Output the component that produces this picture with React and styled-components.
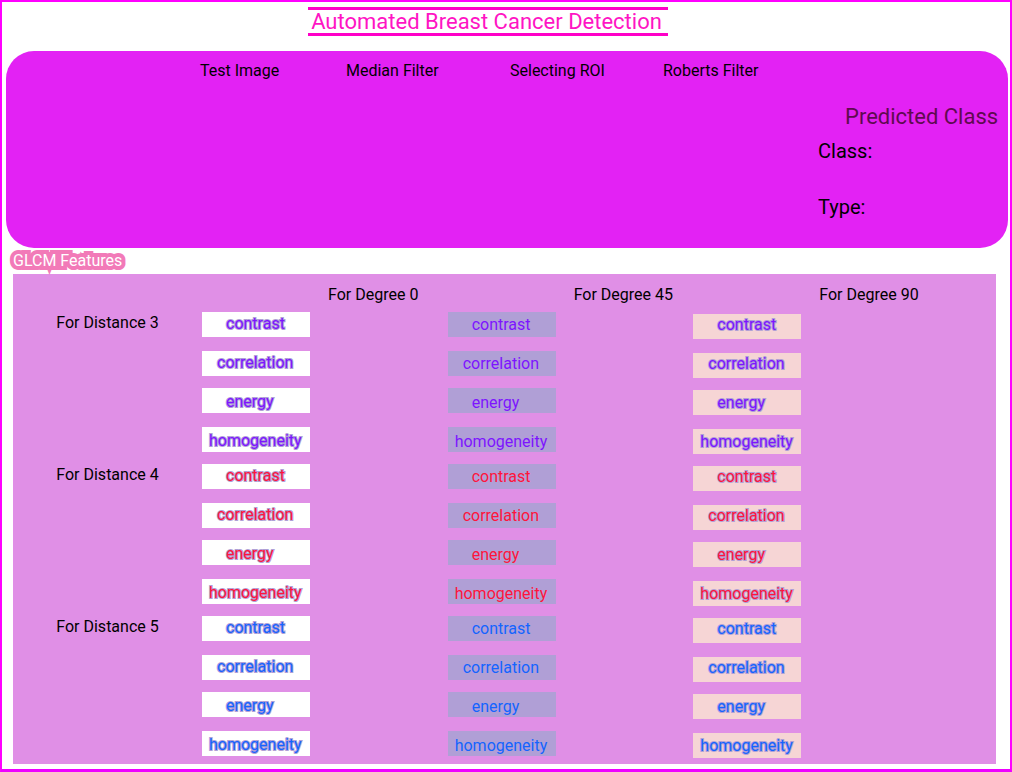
import React from "react";
import styled, { createGlobalStyle } from "styled-components";

const GlobalStyle = createGlobalStyle`
  *, *::before, *::after { box-sizing: border-box; }
  body {
    margin: 0;
    background: #ffffff;
    color: #000000;
    font-family: Roboto, "Liberation Sans", sans-serif;
    font-size: 16px;
    line-height: 20px;
  }
  h1, h2, p, figure, dl, dt, dd { margin: 0; font-weight: 400; }
`;

const Page = styled.main`
  min-height: 100vh;
  border: 2px solid #ff00ff;
  border-bottom: 3px solid #ee00ff;
  padding: 5px 2px 5px 4px;
`;

const Header = styled.header`
  display: flex;
  justify-content: center;
  padding-right: 38px;
`;

const Title = styled.h1`
  border: solid #ff00c8;
  border-width: 3px 0;
  padding: 1px 6px 0 3px;
  font-size: 22px;
  line-height: 22px;
  color: #ff14c4;
`;

const Summary = styled.section`
  display: grid;
  grid-template-columns: 146fr 164fr 153fr 155fr 190fr;
  min-height: 197px;
  margin-top: 15px;
  padding: 10px 0 0 194px;
  border-radius: 28px;
  background: #e322f4;
`;

const Stage = styled.figcaption`
  white-space: nowrap;
`;

const Prediction = styled.div`
  padding-top: 44px;
`;

const PredictionTitle = styled.h2`
  padding-left: 27px;
  font-size: 22px;
  line-height: 24px;
  color: #5f0a50;
  white-space: nowrap;
`;

const ResultList = styled.dl`
  display: grid;
  gap: 32px;
  margin-top: 10px;
  font-size: 20px;
  line-height: 24px;
`;

const Features = styled.section`
  padding: 3px 12px 0 7px;
`;

const FeaturesTitle = styled.h2`
  font-size: 16px;
  line-height: 20px;
  color: #ffffff;
  -webkit-text-stroke: 8px #f27ab8;
  paint-order: stroke fill;
`;

const TablePanel = styled.div`
  margin-top: 3px;
  padding-right: 57px;
  background: #e08fe6;
`;

const Table = styled.table`
  width: 100%;
  table-layout: fixed;
  border-collapse: collapse;

  th, td { padding: 0; font-weight: 400; vertical-align: top; }
`;

const LeadCol = styled.col`
  width: 189px;
`;

const TagCol = styled.col`
  width: 108px;
`;

const HeadRow = styled.tr`
  height: 38px;
`;

const DegreeHead = styled.th`
  && { padding: 11px 0 0 126px; text-align: left; }
`;

const FeatureRow = styled.tr`
  height: ${(p) => (p.$tall ? 39 : 37)}px;

  tbody:last-child > &:last-child { height: 33px; }
`;

const DistanceHead = styled.th`
  && { padding-top: 1px; }
`;

const tones = {
  white: { fill: "#ffffff", top: 0, line: 24, stroke: 2 },
  lavender: { fill: "#b09fd6", top: 0, line: 25, stroke: 1 },
  peach: { fill: "#f6d5d5", top: 2, line: 22, stroke: 2 },
};

const TagCell = styled.th`
  && { padding-top: ${(p) => tones[p.$tone].top}px; text-align: left; }
`;

const Tag = styled.span`
  display: block;
  height: 25px;
  padding-top: ${(p) => p.$drop}px;
  padding-left: ${(p) => p.$indent}px;
  background: ${(p) => tones[p.$tone].fill};
  color: ${(p) => p.$ink};
  line-height: ${(p) => tones[p.$tone].line}px;
  -webkit-text-stroke: ${(p) => tones[p.$tone].stroke}px #b09fd6;
  paint-order: stroke fill;
`;

const degrees = [
  { label: "For Degree 0", tone: "white" },
  { label: "For Degree 45", tone: "lavender" },
  { label: "For Degree 90", tone: "peach" },
];

const distances = [
  { label: "For Distance 3", ink: "#7d14ff" },
  { label: "For Distance 4", ink: "#ff143c" },
  { label: "For Distance 5", ink: "#1464ff" },
];

const features = [
  { name: "contrast", indent: 24, drop: 0, tall: true },
  { name: "correlation", indent: 15, drop: 0, tall: false },
  { name: "energy", indent: 24, drop: 2, tall: true },
  { name: "homogeneity", indent: 7, drop: 2, tall: false },
];

const stages = ["Test Image", "Median Filter", "Selecting ROI", "Roberts Filter"];

export default function App() {
  return (
    <>
      <GlobalStyle />
      <Page>
        <Header>
          <Title>Automated Breast Cancer Detection</Title>
        </Header>

        <Summary>
          {stages.map((s) => (
            <figure key={s}>
              <Stage>{s}</Stage>
            </figure>
          ))}
          <Prediction>
            <PredictionTitle>Predicted Class</PredictionTitle>
            <ResultList>
              <dt>Class:</dt>
              <dt>Type:</dt>
            </ResultList>
          </Prediction>
        </Summary>

        <Features>
          <FeaturesTitle>GLCM Features</FeaturesTitle>
          <TablePanel>
            <Table>
              <colgroup>
                <LeadCol />
                {degrees.map((d) => (
                  <React.Fragment key={d.label}>
                    <TagCol />
                    <col />
                  </React.Fragment>
                ))}
              </colgroup>
              <thead>
                <HeadRow>
                  <td />
                  {degrees.map((d) => (
                    <DegreeHead key={d.label} colSpan={2} scope="colgroup">
                      {d.label}
                    </DegreeHead>
                  ))}
                </HeadRow>
              </thead>
              {distances.map((dist) => (
                <tbody key={dist.label}>
                  {features.map((f, i) => (
                    <FeatureRow key={f.name} $tall={f.tall}>
                      {i === 0 && (
                        <DistanceHead rowSpan={4} scope="rowgroup">
                          {dist.label}
                        </DistanceHead>
                      )}
                      {degrees.map((d) => (
                        <React.Fragment key={d.label}>
                          <TagCell $tone={d.tone} scope="row">
                            <Tag
                              $tone={d.tone}
                              $ink={dist.ink}
                              $indent={f.indent}
                              $drop={f.drop}
                            >
                              {f.name}
                            </Tag>
                          </TagCell>
                          <td />
                        </React.Fragment>
                      ))}
                    </FeatureRow>
                  ))}
                </tbody>
              ))}
            </Table>
          </TablePanel>
        </Features>
      </Page>
    </>
  );
}
